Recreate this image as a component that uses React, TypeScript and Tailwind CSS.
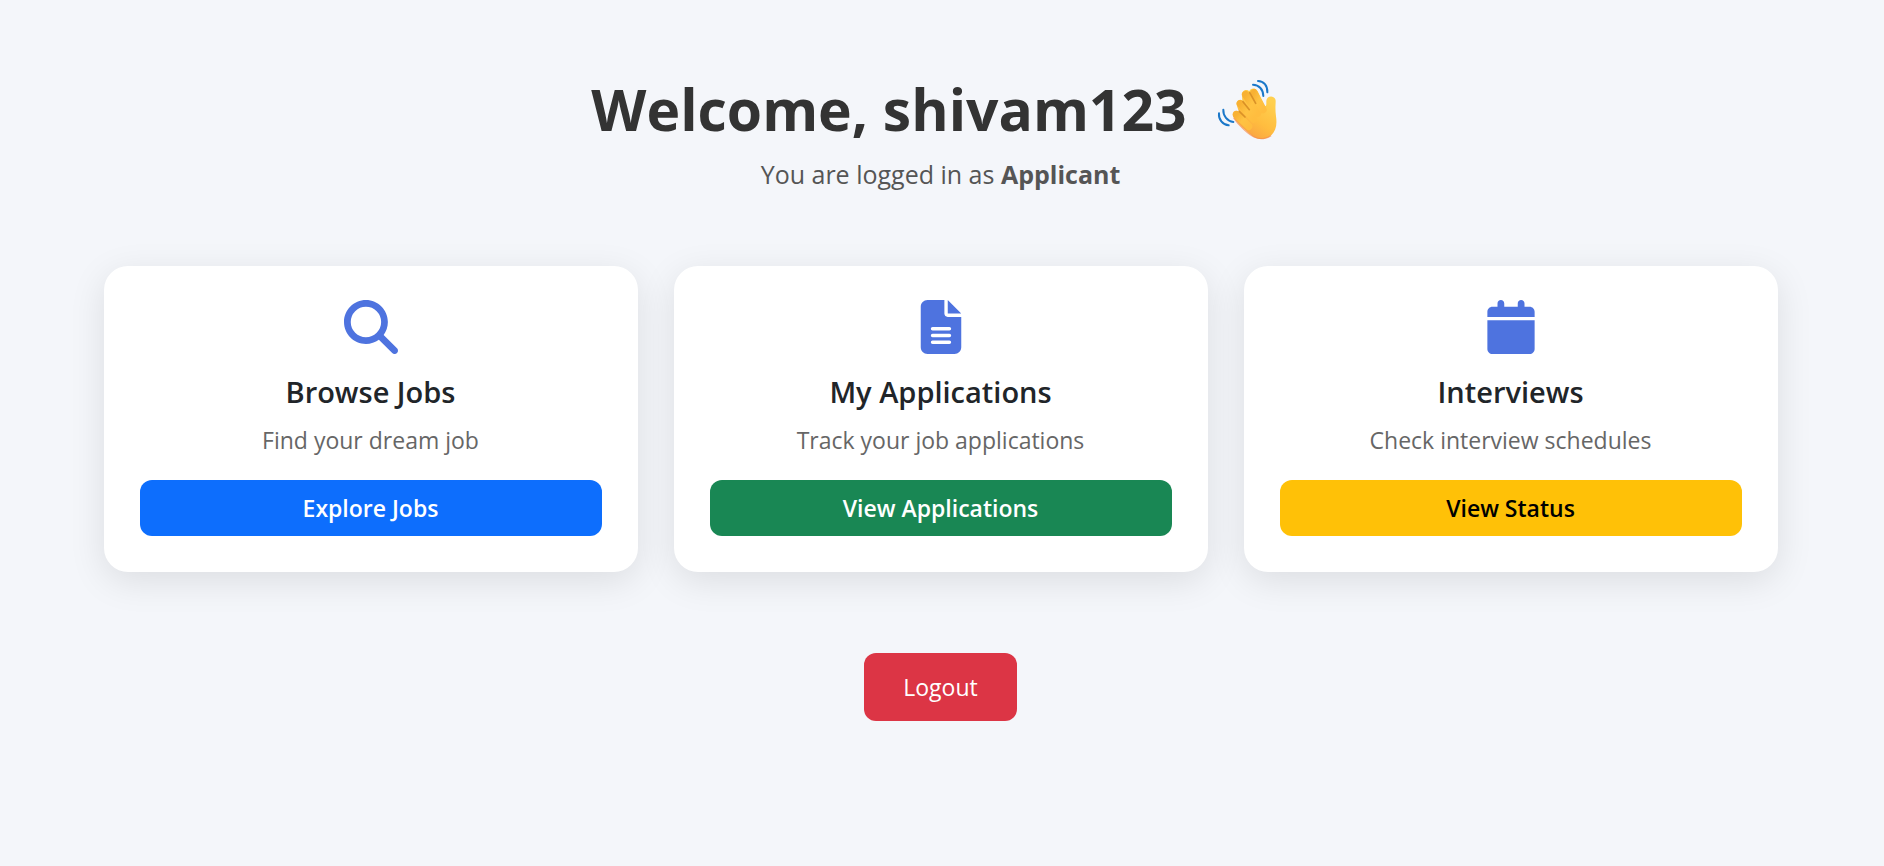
import type { IconType } from 'react-icons';
import { FaCalendar, FaFileLines, FaMagnifyingGlass } from 'react-icons/fa6';

type DashboardCard = {
  title: string;
  description: string;
  action: string;
  icon: IconType;
  buttonClass: string;
};

const cards: DashboardCard[] = [
  {
    title: 'Browse Jobs',
    description: 'Find your dream job',
    action: 'Explore Jobs',
    icon: FaMagnifyingGlass,
    buttonClass: 'bg-[#0d6efd] text-white',
  },
  {
    title: 'My Applications',
    description: 'Track your job applications',
    action: 'View Applications',
    icon: FaFileLines,
    buttonClass: 'bg-[#198754] text-white',
  },
  {
    title: 'Interviews',
    description: 'Check interview schedules',
    action: 'View Status',
    icon: FaCalendar,
    buttonClass: 'bg-[#ffc107] text-black',
  },
];

function WavingHand() {
  return (
    <svg viewBox="44 24 219 186" className="h-[62px] w-[73px]" role="img" aria-label="Waving hand">
      <defs>
        <linearGradient id="palm" x1="200" y1="90" x2="128" y2="200" gradientUnits="userSpaceOnUse">
          <stop offset="0" stopColor="#ffd04f" />
          <stop offset="0.55" stopColor="#ffbd3f" />
          <stop offset="0.85" stopColor="#fbaa41" />
          <stop offset="1" stopColor="#f48a55" />
        </linearGradient>
        <linearGradient id="finger" x1="0" y1="0" x2="1" y2="1">
          <stop offset="0" stopColor="#f8b133" />
          <stop offset="0.5" stopColor="#ffc343" />
          <stop offset="1" stopColor="#ffbd3f" />
        </linearGradient>
      </defs>
      <g fill="none" stroke="#1b78c9" strokeWidth="6" strokeLinecap="round">
        <path d="M167 33C184 33 196 47 195 67" />
        <path d="M152 44C170 44 183 59 183 78" />
        <path d="M50 130C48 148 61 164 79 166" />
        <path d="M63 119C62 138 75 154 93 156" />
      </g>
      <path
        d="M91 133C91 123 101 118 110 126L104 108C99 95 108 86 120 92L119 78C115 63 132 54 141 64C145 52 161 53 166 64L186 105C189 111 192 108 192 101V92C193 78 213 74 219 88C222 94 217 111 221 139C225 167 220 183 207 196C194 209 170 211 153 200C139 191 105 160 95 145C92 141 91 137 91 133Z"
        fill="url(#palm)"
      />
      <g fill="none" stroke="url(#finger)" strokeWidth="22" strokeLinecap="round">
        <path d="M103 134L139 169" />
        <path d="M114 101L153 147" />
        <path d="M130 74L166 130" />
        <path d="M155 68L182 119" />
      </g>
      <g fill="none" stroke="#cf8420" strokeWidth="5" strokeLinecap="round" opacity="0.75">
        <path d="M111 124L128 141" />
        <path d="M122 95L141 119" />
        <path d="M142 68L160 100" />
      </g>
      <path d="M94 144C110 168 140 194 155 201C174 210 194 206 206 197" fill="none" stroke="#f58d4f" strokeWidth="4" opacity="0.7" />
    </svg>
  );
}

export default function App() {
  return (
    <main className="min-h-screen bg-[#f4f6fa] pt-[72px] pr-[27px] pb-12 pl-6 font-['Open_Sans','Noto_Sans',sans-serif]">
      <header className="flex flex-col items-center text-center">
        <h1 className="flex items-center gap-[30px] text-[57px] leading-[74px] font-bold text-[#333]">
          Welcome, shivam123
          <WavingHand />
        </h1>
        <p className="mt-2 text-[25px] leading-10 text-[#555]">
          You are logged in as <strong className="font-bold">Applicant</strong>
        </p>
      </header>

      <section className="mx-auto mt-[72px] grid max-w-[1674px] grid-cols-3 gap-9">
        {cards.map(({ title, description, action, icon: Icon, buttonClass }) => (
          <article
            key={title}
            className="flex flex-col items-center rounded-[24px] bg-white px-9 pt-[34px] pb-9 text-center shadow-[0_9px_36px_rgba(0,0,0,0.1)]"
          >
            <Icon className="size-[54px] text-[#4e73df]" />
            <h2 className="mt-5 text-[29px] leading-9 font-semibold text-[#212529]">{title}</h2>
            <p className="mt-3 text-[23px] leading-9 text-[#666]">{description}</p>
            <button type="button" className={`mt-[22px] h-14 w-full cursor-pointer rounded-xl text-[23px] font-semibold ${buttonClass}`}>
              {action}
            </button>
          </article>
        ))}
      </section>

      <div className="mt-[81px] flex justify-center">
        <button type="button" className="h-[68px] cursor-pointer rounded-xl bg-[#dc3545] px-[39px] text-[23px] text-white">
          Logout
        </button>
      </div>
    </main>
  );
}
